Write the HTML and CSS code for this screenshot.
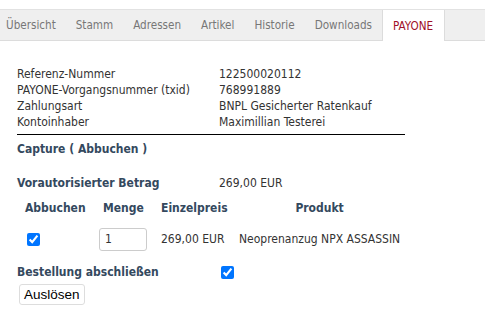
FILE: index.html
```html
<!DOCTYPE html>
<html>
<head>
<meta charset="utf-8">
<link rel="stylesheet" href="styles.css">
</head>
<body>
<div class="tabs">
  <div class="tab">Übersicht</div>
  <div class="tab">Stamm</div>
  <div class="tab">Adressen</div>
  <div class="tab">Artikel</div>
  <div class="tab">Historie</div>
  <div class="tab">Downloads</div>
  <div class="tab active">PAYONE</div>
</div>
<div class="content">
  <div class="info">
    <div class="row"><span class="lbl">Referenz-Nummer</span><span>122500020112</span></div>
    <div class="row"><span class="lbl">PAYONE-Vorgangsnummer (txid)</span><span>768991889</span></div>
    <div class="row"><span class="lbl">Zahlungsart</span><span>BNPL Gesicherter Ratenkauf</span></div>
    <div class="row"><span class="lbl">Kontoinhaber</span><span>Maximillian Testerei</span></div>
  </div>
  <div class="capture">Capture ( Abbuchen )</div>
  <div class="betrag"><span class="lbl bold">Vorautorisierter Betrag</span><span>269,00 EUR</span></div>
  <div class="items">
    <div class="hdr c1">Abbuchen</div>
    <div class="hdr c2">Menge</div>
    <div class="hdr c3">Einzelpreis</div>
    <div class="hdr c4">Produkt</div>
    <div class="cell c1"><input type="checkbox" checked></div>
    <div class="cell c2"><input class="qty" type="text" value="1"></div>
    <div class="cell c3">269,00 EUR</div>
    <div class="cell c4">Neoprenanzug NPX ASSASSIN</div>
  </div>
  <div class="finish"><span class="lbl bold">Bestellung abschließen</span><input type="checkbox" checked></div>
  <button class="btn">Auslösen</button>
</div>
</body>
</html>
```
FILE: styles.css
```css
html, body { margin: 0; padding: 0; background: #fff; }
body { font-family: "DejaVu Sans Condensed", "DejaVu Sans", sans-serif; font-size: 12px; color: #333; }
.tabs {
  margin-top: 9px;
  height: 30px;
  background: #efefef;
  border-top: 1px solid #e2e2e2;
  border-bottom: 1px solid #dcdcdc;
  display: flex;
  align-items: stretch;
  font-size: 11.6px;
}
.tab { padding: 0 10px; display: flex; align-items: center; color: #777; }
.tab:first-child { padding-left: 6px; }
.tab.active {
  background: #fff;
  color: #a01028;
  border-left: 1px solid #dcdcdc;
  border-right: 1px solid #dcdcdc;
  margin-bottom: -1px;
  padding: 0 11px 0 10px;
}
.content { padding: 25px 0 0 17px; }
.row { display: flex; height: 16px; align-items: center; }
.lbl { width: 202px; flex: none; }
.info { width: 388px; border-bottom: 1px solid #000; padding-bottom: 4px; }
.bold { font-weight: bold; color: #34495e; }
.capture { font-weight: bold; color: #34495e; margin-top: 6px; height: 16px; line-height: 16px; }
.betrag { display: flex; margin-top: 18px; height: 16px; line-height: 16px; }
.items {
  display: inline-grid;
  grid-template-columns: 82px 58px 78px auto;
  margin-top: 9px;
}
.hdr { font-weight: bold; color: #34495e; height: 16px; line-height: 16px; padding-left: 8px; }
.hdr.c2, .hdr.c3 { padding-left: 4px; }
.hdr.c4 { padding-left: 4px; text-align: center; }
.cell { margin-top: 11px; height: 24px; display: flex; align-items: center; }
.cell.c3, .cell.c4 { padding-left: 4px; }
.items input[type=checkbox] { margin: 0 0 0 10px; width: 13px; height: 13px; }
.qty {
  width: 48px; height: 23px; box-sizing: border-box; margin: 0;
  border: 1px solid #ccc; border-radius: 3px; padding: 0 5px;
  font-family: "DejaVu Sans Condensed", "DejaVu Sans", sans-serif; font-size: 12px; color: #333;
}
.finish { display: flex; align-items: center; margin-top: 13px; height: 16px; }
.finish input { margin: 0 0 0 2px; width: 13px; height: 13px; }
.btn {
  display: block;
  margin: 4px 0 0 2px; height: 21px; padding: 0 4px;
  font-family: "Liberation Sans", Arial, sans-serif; font-size: 13.5px; color: #000;
  background: #fff; border: 1px solid #ddd; border-radius: 3px;
}
```
